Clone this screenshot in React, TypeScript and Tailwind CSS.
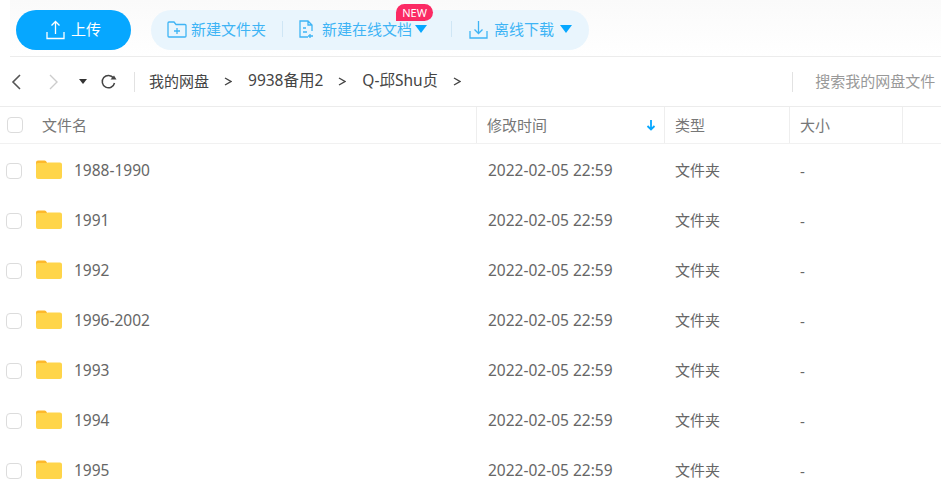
import React from 'react';

const rows = ['1988-1990', '1991', '1992', '1996-2002', '1993', '1994', '1995'];

function FolderIcon() {
  return (
    <svg width="26" height="19" viewBox="0 0 26 19" className="shrink-0">
      <path d="M0 2.500a2 2 0 0 1 2-2h6.500a2 2 0 0 1 1.600.8L11.500 3.500H2L0 6z" fill="#fdb92c" />
      <path d="M0 5a2 2 0 0 1 2-2h8.500l1.500-.5h12a2 2 0 0 1 2 2v12.500a2 2 0 0 1-2 2H2a2 2 0 0 1-2-2z" fill="#ffd54a" />
    </svg>
  );
}

function Checkbox() {
  return <div className="w-4 h-4 rounded-[4px] border border-[#dcdcdc] bg-white shrink-0" />;
}

function Caret({ className }: { className: string }) {
  return (
    <svg width="12" height="8" viewBox="0 0 12 8" className={className}>
      <path d="M0 0h12L6 8z" fill="currentColor" />
    </svg>
  );
}

function Chevron() {
  return (
    <svg width="8" height="9" viewBox="0 0 8 9" className="text-[#444]">
      <path d="M1 1l6 3.500L1 8" fill="none" stroke="currentColor" strokeWidth="1.400" />
    </svg>
  );
}

export default function App() {
  return (
    <div
      className="w-[941px] h-[495px] overflow-hidden bg-white text-[#666] text-[15px]"
      style={{ fontFamily: '"Noto Sans", "Noto Sans CJK SC", sans-serif' }}
    >
      <div className="h-[57px] ml-[10px] pl-[6px] pt-[10px] flex items-start gap-5 border-b border-[#ececec] bg-gradient-to-b from-[#fafafa] to-white">
        <button className="w-[115px] h-[40px] rounded-full bg-[#06a7ff] text-white flex items-center justify-center gap-[6px] text-[15px]">
          <svg width="19" height="20" viewBox="0 0 19 20" fill="none" stroke="currentColor" strokeWidth="1.300">
            <path d="M1 12v6.500h17V12M9.500 14V2M5.500 5.500l4-4 4 4" />
          </svg>
          <span className="-mt-[2px]">上传</span>
        </button>
        <div className="h-[40px] w-[438px] rounded-full bg-[#e9f5fd] flex items-center pl-[16px] pb-[2px] text-[#3eb4f5] text-[15px]">
          <svg width="20" height="17" viewBox="0 0 20 17" fill="none" stroke="currentColor" strokeWidth="1.300" className="mr-[4px]">
            <path d="M1 2a1 1 0 0 1 1-1h5l2 2.500h9a1 1 0 0 1 1 1V15a1 1 0 0 1-1 1H2a1 1 0 0 1-1-1zM10 7v6M7 10h6" />
          </svg>
          <span>新建文件夹</span>
          <div className="w-px h-[16px] bg-[#cfe6f5] ml-[16px] mr-[15px]" />
          <svg width="18" height="19" viewBox="0 0 18 19" fill="none" stroke="currentColor" strokeWidth="1.300" className="mr-[6px]">
            <path d="M10 17H2V1h8l4 4v6M10 1v4h4M5 8h3M5 12h4M12 14v4M10 16h5" />
          </svg>
          <span className="relative">
            新建在线文档
            <span className="absolute left-[74px] -top-[14px] w-[37px] h-[17px] rounded-t-full rounded-br-full rounded-bl-[2px] bg-[#fb2a64] text-white text-[11px] leading-[17px] text-center">
              NEW
            </span>
          </span>
          <Caret className="ml-[3px] text-[#06a7ff]" />
          <div className="w-px h-[16px] bg-[#cfe6f5] ml-[24px] mr-[17px]" />
          <svg width="19" height="19" viewBox="0 0 19 19" fill="none" stroke="currentColor" strokeWidth="1.300" className="mr-[6px]">
            <path d="M1 11v7h17v-7M9.500 1v12M5.500 9.500l4 4 4-4" />
          </svg>
          <span>离线下载</span>
          <Caret className="ml-[6px] text-[#06a7ff]" />
        </div>
      </div>

      <div className="h-[50px] flex items-center border-b border-[#ececec] text-[#444]">
        <svg width="10" height="16" viewBox="0 0 10 16" className="ml-[11px] text-[#555]" fill="none" stroke="currentColor" strokeWidth="1.600">
          <path d="M9 1L2 8l7 7" />
        </svg>
        <svg width="10" height="16" viewBox="0 0 10 16" className="ml-[28px] text-[#ccc]" fill="none" stroke="currentColor" strokeWidth="1.400">
          <path d="M1 1l7 7-7 7" />
        </svg>
        <svg width="8" height="5" viewBox="0 0 8 5" className="ml-[20px] text-[#333]">
          <path d="M0 0h8L4 5z" fill="currentColor" />
        </svg>
        <svg width="17" height="16" viewBox="0 0 17 16" fill="none" className="ml-[13px] text-[#444]">
          <path d="M13.500 4A6.200 6.200 0 1 0 14.500 9" stroke="currentColor" strokeWidth="1.500" />
          <path d="M10.500 5.500h6L14 1.500z" fill="currentColor" />
        </svg>
        <div className="w-px h-[20px] bg-[#e2e2e2] ml-[17px] mr-[14px]" />
        <span className="-mt-px">我的网盘</span>
        <span className="ml-[15px] mr-[16px]"><Chevron /></span>
        <span className="-mt-px text-[15.500px]">9938备用2</span>
        <span className="ml-[15px] mr-[16px]"><Chevron /></span>
        <span className="-mt-px text-[15.500px]">Q-邱Shu贞</span>
        <span className="ml-[15px]"><Chevron /></span>
        <div className="w-px h-[20px] bg-[#e2e2e2] ml-[331px]" />
        <span className="-mt-px ml-[22px] text-[#999]">搜索我的网盘文件</span>
      </div>

      <div className="h-[37px] flex items-center border-b border-[#f1f1f1] text-[#777]">
        <div className="w-[476px] flex items-center pl-[7px] h-full">
          <Checkbox />
          <span className="ml-[19px]">文件名</span>
        </div>
        <div className="w-[188px] h-full flex items-center pl-[10px] pr-[8px] border-l border-[#eeeeee]">
          <span>修改时间</span>
          <svg width="10" height="12" viewBox="0 0 10 12" className="ml-auto text-[#06a7ff]" fill="none" stroke="currentColor" strokeWidth="1.800">
            <path d="M5 1v8M1.500 7L5 10.500 8.500 7" />
          </svg>
        </div>
        <div className="w-[125px] h-full flex items-center pl-[10px] border-l border-[#eeeeee]">类型</div>
        <div className="w-[113px] h-full flex items-center pl-[10px] border-l border-[#eeeeee]">大小</div>
        <div className="flex-1 h-full border-l border-[#eeeeee]" />
      </div>

      <div className="pt-[2px]">
        {rows.map((name) => (
          <div key={name} className="h-[50px] flex items-center">
            <div className="w-[477px] flex items-center pl-[6px]">
              <Checkbox />
              <div className="ml-[14px] -mt-[4px]"><FolderIcon /></div>
              <span className="ml-[12px] text-[15.500px]">{name}</span>
            </div>
            <div className="w-[187px] pl-[11px] text-[15.500px]">2022-02-05 22:59</div>
            <div className="w-[125px] pl-[11px] -mt-[2px]">文件夹</div>
            <div className="pl-[11px]">-</div>
          </div>
        ))}
      </div>
    </div>
  );
}
